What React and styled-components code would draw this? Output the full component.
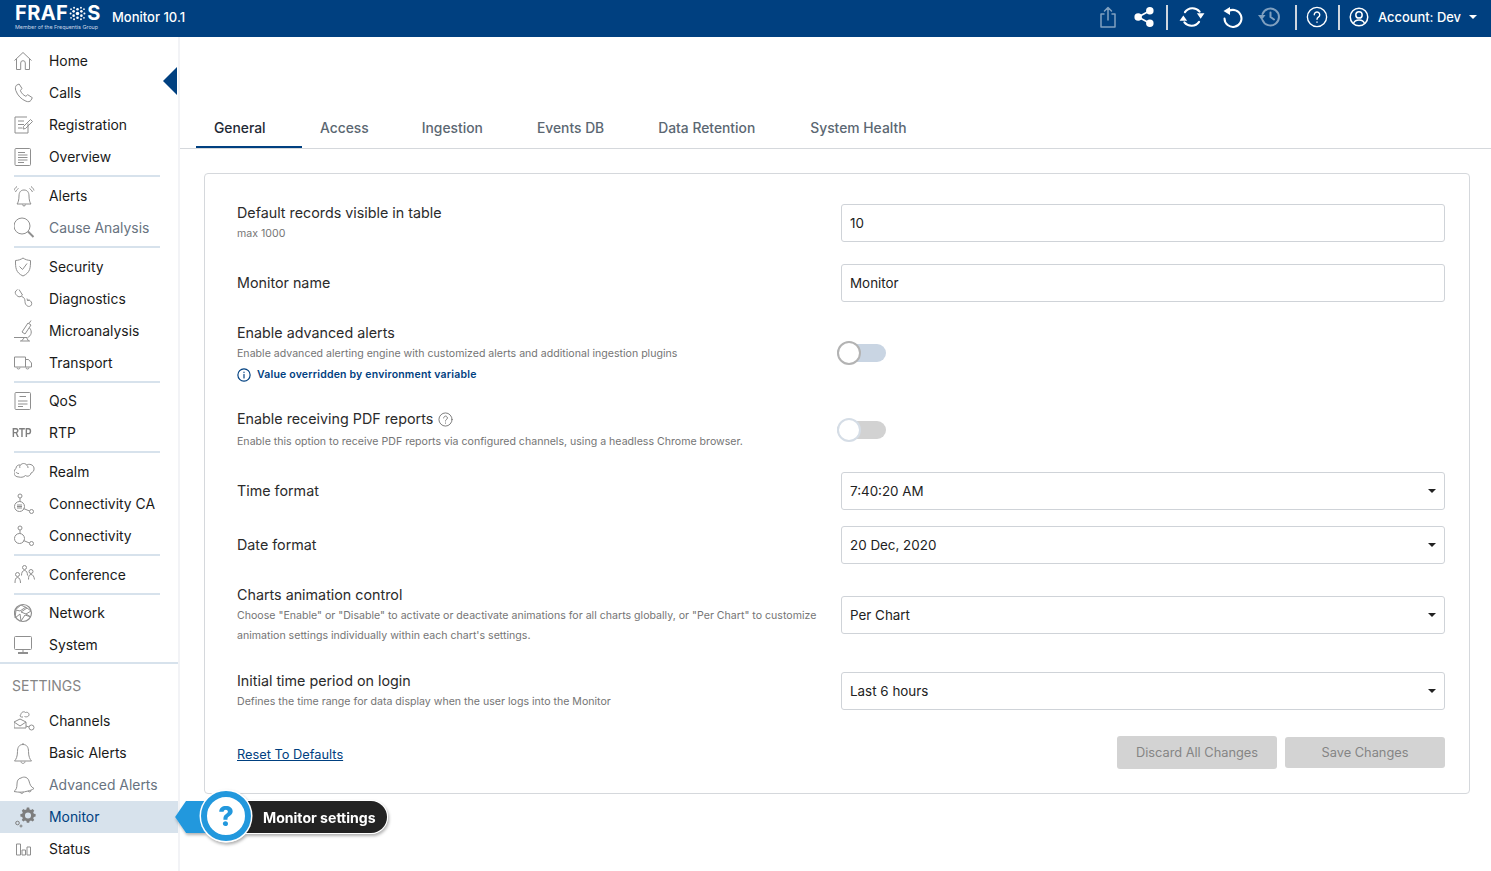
import React from 'react';
import styled, { createGlobalStyle } from 'styled-components';

const GlobalStyle = createGlobalStyle`
  html, body {
    margin: 0;
    padding: 0;
    height: 100%;
    background: #fff;
    font-family: Inter, 'Noto Sans', sans-serif;
    color: #222;
    overflow: hidden;
  }
  * { box-sizing: border-box; }
`;

const Page = styled.div`
  width: 1491px;
  height: 871px;
  display: flex;
  flex-direction: column;
  position: relative;
  overflow: hidden;
`;

const TopBar = styled.header`
  height: 37px;
  background: #004080;
  display: flex;
  align-items: center;
  color: #fff;
  padding: 0 14px 3px 15px;
  flex: none;
`;

const Logo = styled.div`
  width: 97px;
  align-self: flex-start;
  padding-top: 5px;
  display: flex;
  flex-direction: column;
  gap: 2px;
`;

const LogoWord = styled.div`
  font-weight: 700;
  font-size: 20px;
  height: 17px;
  line-height: 17px;
  letter-spacing: 0.4px;
  display: flex;
  align-items: center;
`;

const LogoSub = styled.div`
  font-size: 5.4px;
  line-height: 7px;
  white-space: nowrap;
  color: #c8d6e6;
`;

const Version = styled.div`
  font-size: 13px;
  font-weight: 500;
  color: #fff;
`;

const TopActions = styled.div`
  margin-left: auto;
  display: flex;
  align-items: center;
`;

const TopIcon = styled.span`
  display: flex;
  width: ${p => p.w}px;
  justify-content: center;
  opacity: ${p => (p.dim ? 0.5 : 1)};
`;

const TopSep = styled.span`
  width: 2px;
  height: 25px;
  background: #cfd6df;
  margin: 0 ${p => p.mr}px 0 ${p => p.ml}px;
`;

const Account = styled.div`
  font-size: 12.9px;
  font-weight: 500;
  display: flex;
  align-items: center;
  gap: 9px;
`;

const Caret = styled.span`
  width: 0;
  height: 0;
  margin-left: -1px;
  border-left: 4px solid transparent;
  border-right: 4px solid transparent;
  border-top: 4px solid ${p => p.color || '#fff'};
`;

const Body = styled.div`
  flex: 1;
  display: flex;
  min-height: 0;
`;

const Sidebar = styled.nav`
  width: 180px;
  flex: none;
  border-right: 2px solid #f2f3f6;
  padding-top: 8px;
  position: relative;
`;

const CollapseArrow = styled.span`
  position: absolute;
  left: 163px;
  top: 30px;
  width: 0;
  height: 0;
  border-top: 14px solid transparent;
  border-bottom: 14px solid transparent;
  border-right: 14px solid #004080;
`;

const NavItem = styled.div`
  height: 32px;
  display: flex;
  align-items: center;
  font-size: 13.9px;
  padding-left: 14px;
  color: ${p => (p.active ? '#004080' : p.muted ? '#68737f' : '#1a1a1a')};
  background: ${p => (p.active ? '#d7e2ec' : 'transparent')};
`;

const NavIcon = styled.span`
  width: 35px;
  flex: none;
  display: flex;
  align-items: center;
  svg {
    display: block;
    fill: none;
    stroke: #8f8f8f;
    stroke-width: 1;
  }
`;

const RtpBadge = styled.span`
  font-family: 'Liberation Sans', sans-serif;
  font-size: 12.5px;
  font-weight: 700;
  color: #7f7f7f;
  margin-left: -2px;
  transform: scaleX(0.78);
  transform-origin: left center;
`;

const NavRule = styled.div`
  height: 2px;
  width: 146px;
  margin: 2px 0 ${p => p.after}px 14px;
  background: #d7e2ec;
`;

const NavRuleFull = styled.div`
  height: 2px;
  margin-top: 1px;
  background: #d7e2ec;
`;

const NavHeading = styled.div`
  height: 41px;
  padding: 13px 0 0 12px;
  font-size: 14px;
  color: #858585;
  line-height: 17px;
`;

const Main = styled.main`
  flex: 1;
  min-width: 0;
  display: flex;
  flex-direction: column;
`;

const Tabs = styled.div`
  margin-top: 71px;
  height: 41px;
  padding-left: 16px;
  display: flex;
  border-bottom: 1px solid #d5d8dc;
  flex: none;
`;

const Tab = styled.div`
  height: 40px;
  padding: 12px ${p => p.pr || 36}px 0 18px;
  font-size: 13.85px;
  line-height: 16px;
  font-weight: 500;
  color: ${p => (p.active ? '#1f2a36' : '#5b6772')};
  border-bottom: 2px solid ${p => (p.active ? '#004080' : 'transparent')};
  width: ${p => (p.active ? '106px' : 'auto')};
`;

const Card = styled.section`
  width: 1266px;
  height: 621px;
  margin: 24px 0 0 24px;
  border: 1px solid #d5d8dc;
  border-radius: 4px;
  padding: 29px 24px 0 32px;
`;

const Row = styled.div`
  display: grid;
  grid-template-columns: 604px 604px;
  align-items: center;
  margin-top: ${p => p.gap || 0}px;
`;

const Label = styled.div`
  font-size: 14.3px;
  line-height: 20px;
  color: #2b2b2b;
  display: flex;
  align-items: center;
  gap: 5px;
`;

const Hint = styled.div`
  font-size: 10.6px;
  line-height: 20px;
  color: #757575;
  width: 590px;
  padding-top: 1px;
  margin-top: ${p => p.top || 0}px;
  margin-bottom: -1px;
`;

const Override = styled.div`
  font-size: 10.5px;
  font-weight: 600;
  letter-spacing: 0.2px;
  color: #004080;
  display: flex;
  align-items: center;
  gap: 6px;
  margin-top: 2px;
  line-height: 20px;
`;

const Field = styled.div`
  height: 38px;
  border: 1px solid #cfd3d8;
  border-radius: 3px;
  padding: 0 8px;
  display: flex;
  align-items: center;
  justify-content: space-between;
  font-size: 13.4px;
  color: #222;
`;

const Toggle = styled.div`
  width: 49px;
  height: 18px;
  margin-left: -4px;
  margin-bottom: ${p => p.lift || 0}px;
  border-radius: 9px;
  background: ${p => (p.blue ? '#c9d5e3' : '#d2d2d2')};
  position: relative;
`;

const Knob = styled.span`
  position: absolute;
  left: 0;
  top: -3px;
  width: 24px;
  height: 24px;
  border-radius: 50%;
  background: #fff;
  border: 2px solid ${p => (p.blue ? '#b3b3b3' : '#d5dde6')};
`;

const CardFooter = styled.div`
  margin-top: 25px;
  display: flex;
  align-items: center;
  justify-content: space-between;
`;

const ResetLink = styled.a`
  font-size: 12.8px;
  margin-top: 3px;
  color: #004080;
  text-decoration: underline;
`;

const ButtonRow = styled.div`
  display: flex;
  align-items: center;
  gap: 8px;
`;

const GhostButton = styled.div`
  width: 160px;
  height: ${p => p.h}px;
  background: #d3d3d3;
  border-radius: 3px;
  color: #858585;
  font-size: 12.8px;
  display: flex;
  align-items: center;
  justify-content: center;
`;

const Tip = styled.div`
  position: absolute;
  left: 175px;
  top: 790px;
  width: 216px;
  height: 56px;
  filter: drop-shadow(0 0 0.6px #fff) drop-shadow(1px 2px 1.5px rgba(0, 0, 0, 0.3));
`;

const TipArrow = styled.span`
  position: absolute;
  left: 0;
  top: 11px;
  width: 40px;
  height: 32px;
  background: #2298dd;
  clip-path: polygon(0 50%, 11px 0, 100% 0, 100% 100%, 11px 100%);
`;

const TipPill = styled.span`
  position: absolute;
  left: 62px;
  top: 11px;
  width: 150px;
  height: 32px;
  border-radius: 0 16px 16px 0;
  background: #232323;
  box-shadow: 0 0 0 1px #fff;
  color: #fff;
  font-size: 14.1px;
  font-weight: 700;
  line-height: 34px;
  padding-left: 26px;
  white-space: nowrap;
`;

const TipCircle = styled.span`
  position: absolute;
  left: 26px;
  top: 1px;
  width: 50px;
  height: 50px;
  border-radius: 50%;
  background: #fff;
  border: 6px solid #2298dd;
  box-shadow: 0 0 0 1.5px #fff;
  color: #2298dd;
  font-size: 27px;
  font-weight: 800;
  display: flex;
  align-items: center;
  justify-content: center;
`;

const I = ({ children, s = 20 }) => (
  <svg width={s} height={s} viewBox={`0 0 ${s} ${s}`}>{children}</svg>
);

const icons = {
  home: <I><path d="M.5 9.500 9 1.500l8.500 8M2.500 8v10.500h4.200V12a2.300 2.300 0 0 1 4.600 0v6.500h4.200V8" /></I>,
  calls: <I><path d="M2.500 2.200 5.100 1l3 4.600-1.800 1.700c.8 2.600 3 4.900 5.600 6l1.800-1.600 4.600 3-1.300 2.600c-1 1.500-3 1.700-5 .9C7.500 16.400 3.500 12.500 1.800 7.500 1.100 5.500 1.300 3.400 2.500 2.200Z" /></I>,
  registration: <I><path d="M14 8.500V18H1V2h12M4 6h6M4 9.500h6M4 13h4M9 14l.5-2.500 7-7 2 2-7 7Z" /></I>,
  overview: <I><rect x="1" y="1.500" width="15.500" height="17" rx="1" /><path d="M4 5.500h7M4 8h9.500M4 10.500h9.500M4 13h9.500M4 15.500h6" /></I>,
  alerts: <I s={22}><path d="M10 5C6.500 5 5 7.500 5 11c0 4-1 7-2 8h14c-1-1-2-4-2-8 0-3.500-1.500-6-5-6ZM8.500 19.500c0 2 3 2 3 0M1.500 7c.5-1.500 1.500-2.500 3-3.500M0 5.500C.5 3.800 1.500 2.500 3 1.500M18.500 7c-.5-1.500-1.500-2.500-3-3.500M20 5.500c-.5-1.700-1.500-3-3-4" /></I>,
  cause: <I s={22}><circle cx="8" cy="9" r="8" /><path d="m14 14.500 5.500 5.500" strokeWidth="2" /></I>,
  security: <I><path d="M9 1c2 1.500 4.500 2.300 7.500 2.500 0 7 0 12-7.500 15.500C1.500 15.500 1.500 10.500 1.500 3.500 4.500 3.300 7 2.500 9 1Z" /><path d="m5.500 9.500 3 3 4.500-6" /></I>,
  diag: <I s={22}><path d="M3.500 1.500 1.800 3c-1.200 1.500-.3 3.300 1 4.500 1.300 1.300 3 1.800 4.200.8L8.500 7 5 1.500M7.500 8.500c2.500.5 3.500 2.500 3.500 5 0 3.500 3 6 5.500 4.500 1.800-1.200 1.500-4-.2-5.200-.8-.6-1.800-.7-2.800-.3M13 10.500l.5 2 2-.5" /></I>,
  micro: <I s={22}><path d="M0 17.500h13M6 21h10M7.500 21l3-3.500M14.500 21l-2-3.500M8 12l6-9 3 2-6 9ZM15.500 8c3 3 2 8-2 9.500M17 .5 15 3.500" /></I>,
  transport: <I><path d="M.5 4h11v10H.5ZM11.500 6.500h3l3 3.500v4h-6M3 14.500a1.500 1.500 0 0 0 3 0M12 14.500a1.500 1.500 0 0 0 3 0" /></I>,
  qos: <I><rect x="1" y="1.500" width="15.500" height="17" rx="1" /><path d="M4 10h9.500M4 13h9.500M4 15.500h5M5.500 5.500h6.500" /></I>,
  realm: <I s={22}><path d="M5 16c-3 0-5-1.500-5-4.500C0 9.500 1 8 2 7.500 2 5 4 3.500 6.500 4c1.500-2 5-2 6 0 2.500-1.500 7-.5 7.500 3 .5 3-1.500 4.500-3 5-.5 3-3.500 4-5.500 2.500-2 2-5 2-6.500 1.500ZM6.500 4c-1 1-1 2-.5 3M12.500 4c1 .5 1.500 1.500 1.500 3M2 11c.5 1 1.500 1.500 3 1.500" /></I>,
  connCa: <I s={22}><circle cx="6" cy="3" r="2" /><path d="M6 5v4" /><circle cx="5.500" cy="13.500" r="5" /><path d="m9.500 15.500 6 2.500" /><circle cx="17.500" cy="18.500" r="2" /><path d="M3 13.500h5M3 12h5M3 15h5" /></I>,
  conn: <I s={22}><circle cx="6" cy="3" r="2" /><path d="M6 5v4" /><circle cx="5.500" cy="13.500" r="5" /><path d="m9.500 15.500 6 2.500" /><circle cx="17.500" cy="18.500" r="2" /></I>,
  conf: <I s={22}><circle cx="10.500" cy="3.500" r="2" /><path d="M7.500 11.500c0-3 1-5 3-5s3 2 3 5" /><circle cx="17" cy="7.500" r="2" /><path d="M14.500 15.500c0-3 .5-5 2.500-5s3 2 3.500 5" /><circle cx="3.500" cy="10.500" r="2" /><path d="M1 19c0-3 .5-5.500 2.500-5.500s3 2.500 3 5.500" /></I>,
  network: <I><circle cx="9" cy="10" r="8.500" strokeWidth="1.200" /><path d="M1 7l6-5 6 3 4 3-5 3 5 3-6-2-4 6-1-7-5 4 1-8 4 1 6-4M7 9l5 2M7 9l6-4" /></I>,
  system: <I><rect x=".5" y="1.500" width="17" height="13" rx="1" /><path d="M9 14.500v2.500M4 18.500h10M4 17.500h10" /></I>,
  channels: <I s={22}><path d="M9 7H7.500C6 7 5.500 5 7 4.500 7 2 10 1 11.500 2.500 14 1.500 16 4 14.500 6c-1 1-3 1-4 .5M0 12l6-3 6 3v6H0ZM0 12l6 4 6-4M12 16l3 1" /><circle cx="17.500" cy="17.500" r="2.500" /></I>,
  basic: <I s={22}><path d="M9 2.500c-4 0-5.500 3-5.500 7 0 5-1.500 8-3 9.500h17c-1.500-1.500-3-4.500-3-9.500 0-4-1.500-7-5.500-7ZM7 19.500c0 2.500 4 2.500 4 0M9 1v1.500" /></I>,
  advanced: <I s={22}><path d="M7 4C4 4.500 3 7 3 10c0 4-1 6-3 7.500 5 1 9 1 14-.5M7 4c3.500-2 7-.5 8 3 1 4 2 6 5 7.500-2 1.500-4 2-6 2.500M6 18c.5 2 3 2 3.500 0M14 17c1 1.500 3 1 3-.5" /></I>,
  status: <I s={18}><path d="M2.500 4h4v11h-4ZM8 10h3.500v5H8ZM13 7h3.500v8H13Z" /></I>,
};

const SettingsGlyph = () => (
  <svg width="22" height="22" viewBox="0 0 22 22">
    <path fill="#7d7d7d" stroke="none" d="M11 1h3l.5 2.300 1.800.8 2-1.300 2 2-1.300 2 .8 1.800L22 9.100v3l-2.200.5-.8 1.800 1.300 2-2 2-2-1.300-1.800.8-.5 2.100h-3l-.5-2.100-1.800-.8-2 1.300-2-2 1.300-2-.8-1.800L3 12.100v-3l2.200-.5.800-1.800-1.300-2 2-2 2 1.300 1.800-.8Zm1.500 6a3.800 3.800 0 1 0 0 7.600 3.800 3.800 0 0 0 0-7.600Z" transform="scale(.8) translate(5 1)" />
    <circle cx="3.500" cy="17" r="1.800" stroke="#7d7d7d" />
    <circle cx="7" cy="20" r="1" stroke="#7d7d7d" />
  </svg>
);

const navGroups = [
  { items: [['home', 'Home'], ['calls', 'Calls'], ['registration', 'Registration'], ['overview', 'Overview']], after: 3 },
  { items: [['alerts', 'Alerts'], ['cause', 'Cause Analysis', true]], after: 3 },
  { items: [['security', 'Security'], ['diag', 'Diagnostics'], ['micro', 'Microanalysis'], ['transport', 'Transport']], after: 2 },
  { items: [['qos', 'QoS'], ['rtp', 'RTP']], after: 3 },
  { items: [['realm', 'Realm'], ['connCa', 'Connectivity CA'], ['conn', 'Connectivity']], after: 3 },
  { items: [['conf', 'Conference']], after: 2 },
];

const settingsItems = [
  ['channels', 'Channels'], ['basic', 'Basic Alerts'], ['advanced', 'Advanced Alerts', true],
  ['monitor', 'Monitor', false, true], ['status', 'Status'],
];

const renderItem = ([icon, label, muted, active]) => (
  <NavItem key={label} muted={muted} active={active}>
    <NavIcon>
      {icon === 'rtp' ? <RtpBadge>RTP</RtpBadge> : icon === 'monitor' ? <SettingsGlyph /> : icons[icon]}
    </NavIcon>
    {label}
  </NavItem>
);

const StrokeIcon = ({ children, s = 20, sw = 2 }) => (
  <svg width={s} height={s} viewBox="0 0 24 24" fill="none" stroke="#fff" strokeWidth={sw} strokeLinecap="round" strokeLinejoin="round">
    {children}
  </svg>
);

const Filled = ({ d }) => <path d={d} fill="#fff" stroke="none" />;

const FlakeDots = () => (
  <svg width="19" height="17" viewBox="0 0 22 17" fill="#fff">
    {[[11, 8.5, 2], [11, 3.5, 1.5], [11, 13.5, 1.5], [6.5, 6, 1.5], [15.5, 6, 1.5], [6.5, 11, 1.5], [15.5, 11, 1.5], [3, 8.5, 1.2], [19, 8.5, 1.2], [7, 1.8, 1.1], [15, 1.8, 1.1], [7, 15.2, 1.1], [15, 15.2, 1.1], [3.5, 3.5, 1], [18.5, 3.5, 1], [3.5, 13.5, 1], [18.5, 13.5, 1]].map(([x, y, r]) => (
      <circle key={`${x}-${y}`} cx={x} cy={y} r={r} />
    ))}
  </svg>
);

const InfoIcon = () => (
  <svg width="14" height="14" viewBox="0 0 24 24" fill="none" stroke="#004080" strokeWidth="2" strokeLinecap="round">
    <circle cx="12" cy="12" r="10.5" />
    <path d="M12 11v6M12 7v.5" />
  </svg>
);

const HelpIcon = () => (
  <svg width="15" height="15" viewBox="0 0 24 24" fill="none" stroke="#777" strokeWidth="1.5" strokeLinecap="round">
    <circle cx="12" cy="12" r="10.5" />
    <path d="M9 9.500a3 3 0 1 1 4.500 2.600c-1 .6-1.500 1.100-1.500 2.400M12 17.500v.5" />
  </svg>
);

export default function App() {
  return (
    <Page>
      <GlobalStyle />
      <TopBar>
        <Logo>
          <LogoWord>FRAF<FlakeDots />S</LogoWord>
          <LogoSub>Member of the Frequentis Group</LogoSub>
        </Logo>
        <Version>Monitor 10.1</Version>
        <TopActions>
          <TopIcon dim w={38}>
            <StrokeIcon s={24} sw={1.5}>
              <path d="M8 9H5v13h14V9h-3M12 15V2.500M8.500 6 12 2.500 15.500 6" />
            </StrokeIcon>
          </TopIcon>
          <TopIcon w={34}>
            <svg width="20" height="20" viewBox="0 0 24 24" fill="#fff" stroke="#fff" strokeWidth="2">
              <circle cx="19" cy="4.500" r="3.500" /><circle cx="5" cy="12" r="3.500" /><circle cx="19" cy="19.500" r="3.500" />
              <path d="m5 12 14-7.500M5 12l14 7.500" />
            </svg>
          </TopIcon>
          <TopSep ml={5} mr={4} />
          <TopIcon w={40}>
            <StrokeIcon s={26}>
              <path d="M5.500 7.500a8.500 8.500 0 0 1 13.500-.5M18.500 16.500a8.500 8.500 0 0 1-13.500.5" />
              <Filled d="M16.500 8.500h7l-3.500 5ZM7.500 15.500h-7l3.500-5Z" />
            </StrokeIcon>
          </TopIcon>
          <TopIcon w={42}>
            <StrokeIcon s={24}>
              <path d="M7.500 6.200A8.500 8.500 0 1 1 3.500 13.500" />
              <Filled d="M9 2v8l-6.500-4Z" />
            </StrokeIcon>
          </TopIcon>
          <TopIcon dim w={32}>
            <StrokeIcon s={24}>
              <path d="M4.500 9a8.500 8.500 0 1 1 0 6M12.500 7.500V12l3.500 2.500" />
              <Filled d="M0 10h7.500l-3.800 5Z" />
            </StrokeIcon>
          </TopIcon>
          <TopSep ml={9} mr={9} />
          <TopIcon w={22}>
            <StrokeIcon s={22} sw={1.5}>
              <circle cx="12" cy="12" r="10.5" />
              <path d="M9 9.500a3 3 0 1 1 4.500 2.600c-1 .6-1.500 1.100-1.500 2.400M12 17.500v.2" />
            </StrokeIcon>
          </TopIcon>
          <TopSep ml={10} mr={9} />
          <Account>
            <StrokeIcon s={20} sw={1.8}>
              <circle cx="12" cy="12" r="10.5" />
              <circle cx="12" cy="9.500" r="3.800" />
              <path d="M5.500 19.500c1-3 3.500-4 6.500-4s5.500 1 6.500 4" />
            </StrokeIcon>
            Account: Dev
            <Caret />
          </Account>
        </TopActions>
      </TopBar>
      <Body>
        <Sidebar>
          <CollapseArrow />
          {navGroups.map(group => (
            <React.Fragment key={group.items[0][1]}>
              {group.items.map(renderItem)}
              <NavRule after={group.after} />
            </React.Fragment>
          ))}
          {renderItem(['network', 'Network'])}
          {renderItem(['system', 'System'])}
          <NavRuleFull />
          <NavHeading>SETTINGS</NavHeading>
          {settingsItems.map(renderItem)}
        </Sidebar>
        <Main>
          <Tabs>
            <Tab active>General</Tab>
            <Tab pr={35}>Access</Tab>
            <Tab>Ingestion</Tab>
            <Tab>Events DB</Tab>
            <Tab pr={37}>Data Retention</Tab>
            <Tab>System Health</Tab>
          </Tabs>
          <Card>
            <Row>
              <div>
                <Label>Default records visible in table</Label>
                <Hint>max 1000</Hint>
              </div>
              <Field>10</Field>
            </Row>
            <Row gap={21}>
              <Label>Monitor name</Label>
              <Field>Monitor</Field>
            </Row>
            <Row gap={21}>
              <div>
                <Label>Enable advanced alerts</Label>
                <Hint>Enable advanced alerting engine with customized alerts and additional ingestion plugins</Hint>
                <Override><InfoIcon />Value overridden by environment variable</Override>
              </div>
              <Toggle blue lift={2}><Knob blue /></Toggle>
            </Row>
            <Row gap={24}>
              <div>
                <Label>Enable receiving PDF reports<HelpIcon /></Label>
                <Hint top={2}>Enable this option to receive PDF reports via configured channels, using a headless Chrome browser.</Hint>
              </div>
              <Toggle><Knob /></Toggle>
            </Row>
            <Row gap={21}>
              <Label>Time format</Label>
              <Field>7:40:20 AM<Caret color="#222" /></Field>
            </Row>
            <Row gap={16}>
              <Label>Date format</Label>
              <Field>20 Dec, 2020<Caret color="#222" /></Field>
            </Row>
            <Row gap={21}>
              <div>
                <Label>Charts animation control</Label>
                <Hint>Choose "Enable" or "Disable" to activate or deactivate animations for all charts globally, or "Per Chart" to customize animation settings individually within each chart's settings.</Hint>
              </div>
              <Field>Per Chart<Caret color="#222" /></Field>
            </Row>
            <Row gap={26}>
              <div>
                <Label>Initial time period on login</Label>
                <Hint>Defines the time range for data display when the user logs into the Monitor</Hint>
              </div>
              <Field>Last 6 hours<Caret color="#222" /></Field>
            </Row>
            <CardFooter>
              <ResetLink>Reset To Defaults</ResetLink>
              <ButtonRow>
                <GhostButton h={33}>Discard All Changes</GhostButton>
                <GhostButton h={31}>Save Changes</GhostButton>
              </ButtonRow>
            </CardFooter>
          </Card>
        </Main>
      </Body>
      <Tip>
        <TipArrow />
        <TipPill>Monitor settings</TipPill>
        <TipCircle>?</TipCircle>
      </Tip>
    </Page>
  );
}
